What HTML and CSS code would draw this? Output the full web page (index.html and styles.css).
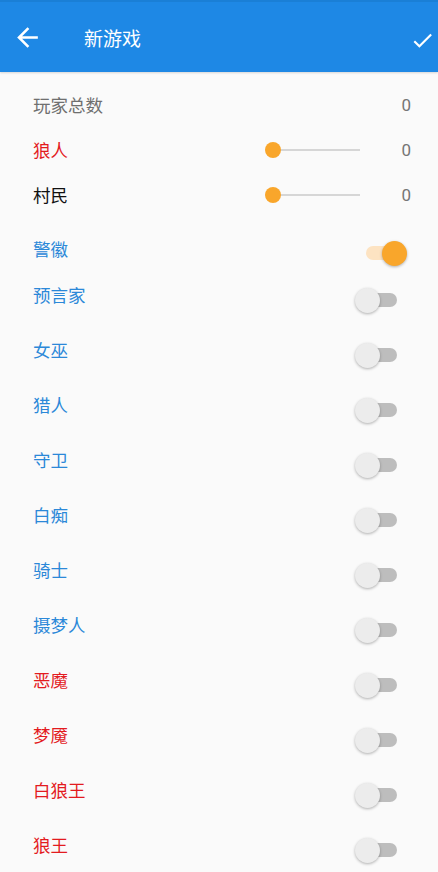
FILE: index.html
```html
<!DOCTYPE html>
<html>

<head>
    <meta charset="utf-8">
    <title>新游戏</title>
    <link rel="stylesheet" href="styles.css">
</head>

<body>
    <div class="toolbar">
        <svg class="icon-back" viewBox="0 0 24 24" width="31" height="31">
            <path fill="#fff" d="M20 11H7.83l5.59-5.59L12 4l-8 8 8 8 1.41-1.41L7.83 13H20v-2z"/>
        </svg>
        <span class="title">新游戏</span>
        <svg class="icon-done" viewBox="0 0 24 24" width="25" height="25">
            <path fill="#fff" d="M9 16.17L4.83 12l-1.42 1.41L9 19 21 7l-1.41-1.41z"/>
        </svg>
    </div>

    <div class="list">
        <div class="row">
            <span class="label gray">玩家总数</span>
            <span class="value">0</span>
        </div>
        <div class="row">
            <span class="label red">狼人</span>
            <div class="slider"><span class="thumb"></span></div>
            <span class="value">0</span>
        </div>
        <div class="row">
            <span class="label black">村民</span>
            <div class="slider"><span class="thumb"></span></div>
            <span class="value">0</span>
        </div>

        <div class="toggle first">
            <span class="label blue">警徽</span>
            <div class="switch on"><span class="knob"></span></div>
        </div>
        <div class="toggle">
            <span class="label blue">预言家</span>
            <div class="switch"><span class="knob"></span></div>
        </div>
        <div class="toggle">
            <span class="label blue">女巫</span>
            <div class="switch"><span class="knob"></span></div>
        </div>
        <div class="toggle">
            <span class="label blue">猎人</span>
            <div class="switch"><span class="knob"></span></div>
        </div>
        <div class="toggle">
            <span class="label blue">守卫</span>
            <div class="switch"><span class="knob"></span></div>
        </div>
        <div class="toggle">
            <span class="label blue">白痴</span>
            <div class="switch"><span class="knob"></span></div>
        </div>
        <div class="toggle">
            <span class="label blue">骑士</span>
            <div class="switch"><span class="knob"></span></div>
        </div>
        <div class="toggle">
            <span class="label blue">摄梦人</span>
            <div class="switch"><span class="knob"></span></div>
        </div>
        <div class="toggle">
            <span class="label red">恶魔</span>
            <div class="switch"><span class="knob"></span></div>
        </div>
        <div class="toggle">
            <span class="label red">梦魇</span>
            <div class="switch"><span class="knob"></span></div>
        </div>
        <div class="toggle">
            <span class="label red">白狼王</span>
            <div class="switch"><span class="knob"></span></div>
        </div>
        <div class="toggle">
            <span class="label red">狼王</span>
            <div class="switch"><span class="knob"></span></div>
        </div>
    </div>
</body>

</html>
```

FILE: styles.css
```css
* {
    margin: 0;
    padding: 0;
    box-sizing: border-box;
}

body {
    background-color: #fafafa;
    font-family: Roboto, "Noto Sans CJK SC", sans-serif;
    overflow: hidden;
}

.toolbar {
    height: 72px;
    background-color: #1e88e5;
    border-top: 2px solid #1a7fd6;
    display: flex;
    align-items: center;
    box-shadow: 0 1px 2px rgba(0,0,0,0.15);
}

.icon-back {
    margin-left: 12px;
}

.title {
    color: #fff;
    font-size: 19px;
    margin-left: 41px;
    flex: 1;
}

.icon-done {
    margin-right: 3px;
    margin-top: 7px;
}

.list {
    padding-top: 10px;
}

.row {
    height: 45px;
    display: flex;
    align-items: center;
    padding-left: 33px;
}

.label {
    flex: 1;
    font-size: 17.5px;
}

.gray { color: #6f6f6f; }
.red { color: #e31b1f; }
.black { color: #111; }
.blue { color: #2b88d8; }

.value {
    width: 40px;
    padding-right: 27px;
    text-align: right;
    color: #757575;
    font-size: 17px;
}

.slider {
    width: 95px;
    height: 16px;
    margin-right: 38px;
    display: flex;
    align-items: center;
    background: linear-gradient(#d6d6d6, #d6d6d6) no-repeat 8px center / 87px 2px;
}

.slider .thumb {
    width: 16px;
    height: 16px;
    border-radius: 50%;
    background-color: #f9a62b;
}

.toggle {
    height: 55px;
    display: flex;
    align-items: center;
    padding-left: 33px;
}

.toggle.first {
    height: 50px;
    padding-top: 12px;
}

.switch {
    position: relative;
    width: 42px;
    height: 24px;
    margin-right: 41px;
    margin-top: 10px;
}

.switch::before {
    content: "";
    position: absolute;
    left: 2px;
    top: 5px;
    width: 40px;
    height: 14px;
    border-radius: 7px;
    background-color: #bdbdbd;
}

.switch .knob {
    position: absolute;
    left: 0;
    top: 0;
    width: 25px;
    height: 25px;
    border-radius: 50%;
    background-color: #ececec;
    box-shadow: 0 1px 3px rgba(0,0,0,0.3);
}

.switch.on {
    margin-right: 31px;
}

.switch.on::before {
    left: 1px;
    background-color: #fde3c2;
}

.switch.on .knob {
    left: 17px;
    background-color: #f9a62b;
}
```
